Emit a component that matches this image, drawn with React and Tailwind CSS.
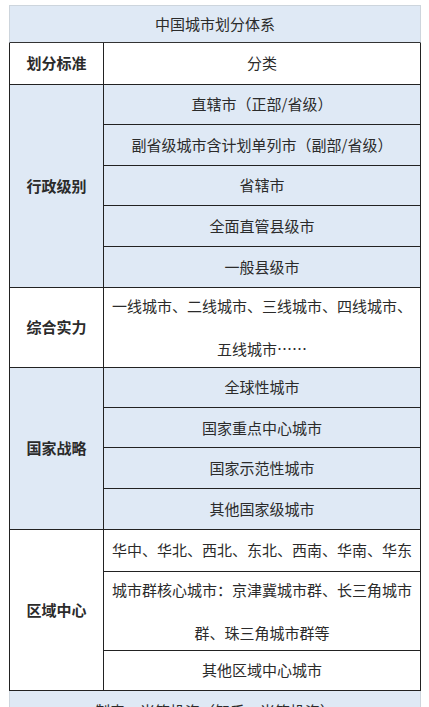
import React from 'react'

const font = { fontFamily: '"Noto Sans CJK SC", "Noto Sans", sans-serif' }

const sections = [
  {
    label: '行政级别',
    bg: 'bg-[#dfe9f5]',
    rows: [
      { text: '直辖市（正部/省级）', h: 'h-[40.4px]' },
      { text: '副省级城市含计划单列市（副部/省级）', h: 'h-[40.4px]' },
      { text: '省辖市', h: 'h-[40.4px]' },
      { text: '全面直管县级市', h: 'h-[40.4px]' },
      { text: '一般县级市', h: 'h-[40.4px]' },
    ],
  },
  {
    label: '综合实力',
    bg: 'bg-white',
    rows: [
      { text: '一线城市、二线城市、三线城市、四线城市、五线城市……', h: 'h-[79px]', multi: true },
    ],
  },
  {
    label: '国家战略',
    bg: 'bg-[#dfe9f5]',
    rows: [
      { text: '全球性城市', h: 'h-[40.25px]' },
      { text: '国家重点中心城市', h: 'h-[40.25px]' },
      { text: '国家示范性城市', h: 'h-[40.25px]' },
      { text: '其他国家级城市', h: 'h-[40.25px]' },
    ],
  },
  {
    label: '区域中心',
    bg: 'bg-white',
    rows: [
      { text: '华中、华北、西北、东北、西南、华南、华东', h: 'h-[42px]' },
      { text: '城市群核心城市：京津冀城市群、长三角城市群、珠三角城市群等', h: 'h-[79px]', multi: true },
      { text: '其他区域中心城市', h: 'h-[39px]' },
    ],
  },
]

const App = () => {
  return (
    <div className='w-full h-[707px] overflow-hidden bg-white pt-[5px] pl-[9px] text-[15px] text-[#2b2b2b]' style={font}>
      <div className='w-[412px]'>
        <div className='h-[38px] flex items-center justify-center bg-[#dfe9f5] border-t border-l border-r border-[#cdd5dd] border-b border-b-[#333]'>
          中国城市划分体系
        </div>

        <div className='flex h-[42px] bg-white border-l border-r border-b border-[#222]'>
          <div className='w-[94px] border-r border-[#222] flex items-center justify-center font-semibold'>
            划分标准
          </div>
          <div className='flex-1 flex items-center justify-center'>
            分类
          </div>
        </div>

        {sections.map((s) => (
          <div key={s.label} className={`flex border-l border-r border-b border-[#222] ${s.bg}`}>
            <div className='w-[94px] shrink-0 border-r border-[#222] flex items-center justify-center font-semibold'>
              {s.label}
            </div>
            <div className='flex-1 flex flex-col'>
              {s.rows.map((r, i) => (
                <div
                  key={i}
                  className={`${r.h} flex items-center justify-center text-center px-[5px] ${i < s.rows.length - 1 ? 'border-b border-[#222]' : ''} ${r.multi ? 'leading-[43px]' : ''}`}
                >
                  {r.text}
                </div>
              ))}
            </div>
          </div>
        ))}

        <div className='h-[40px] flex items-center justify-center bg-[#dfe9f5] border-l border-r border-[#cdd5dd]'>
          制表：米筋投资（知乎：米筋投资）
        </div>
      </div>
    </div>
  )
}

export default App
